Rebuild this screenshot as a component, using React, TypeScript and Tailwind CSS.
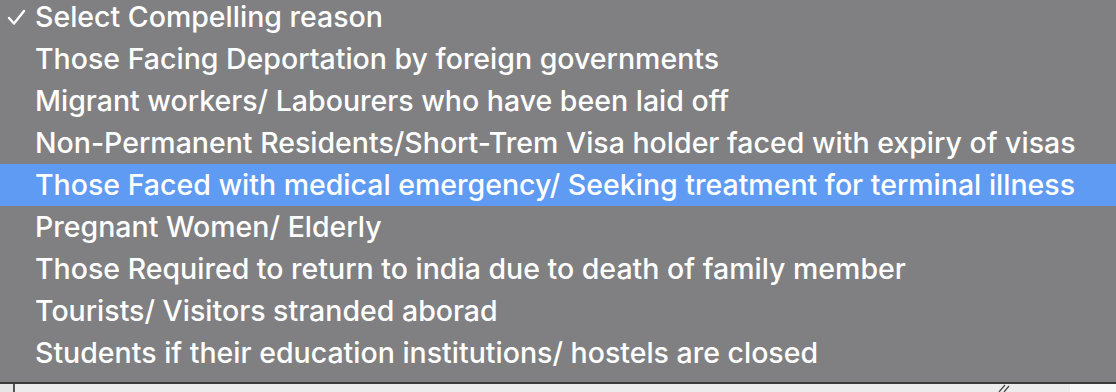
import React from 'react';

const OPTIONS = [
  'Select Compelling reason',
  'Those Facing Deportation by foreign governments',
  'Migrant workers/ Labourers who have been laid off',
  'Non-Permanent Residents/Short-Trem Visa holder faced with expiry of visas',
  'Those Faced with medical emergency/ Seeking treatment for terminal illness',
  'Pregnant Women/ Elderly',
  'Those Required to return to india due to death of family member',
  'Tourists/ Visitors stranded aborad',
  'Students if their education institutions/ hostels are closed',
];

const CHECKED = 0;
const HIGHLIGHTED = 4;

export default function App() {
  return (
    <div className="w-[1116px] h-[392px] overflow-hidden bg-[#e6e6e6] flex flex-col" style={{ fontFamily: 'Inter, "Noto Sans", sans-serif' }}>
      <div className="h-[384px] shrink-0 bg-[#808082] border-b-2 border-[#3a3a3a] overflow-hidden">
        <div className="-mt-1 flex flex-col">
          {OPTIONS.map((opt, i) => (
            <div
              key={opt}
              className={`h-[42px] flex items-center text-[28.5px] font-medium leading-none text-white ${i === HIGHLIGHTED ? 'bg-[#5f9bf3]' : ''}`}
            >
              <span className="w-[35px] shrink-0 flex justify-center">
                {i === CHECKED && (
                  <svg width="19" height="17" viewBox="0 0 19 17" fill="none" className="ml-[-3px]">
                    <path d="M2 9 L7 14.5 L17 2" stroke="white" strokeWidth="2.4" strokeLinecap="round" strokeLinejoin="round" />
                  </svg>
                )}
              </span>
              <span className="whitespace-nowrap">{opt}</span>
            </div>
          ))}
        </div>
      </div>
      <div className="flex-1 flex">
        <div className="w-[15px] border-r-2 border-[#555]" />
        <div className="flex-1 bg-[#ececec] relative">
          <svg width="14" height="8" viewBox="0 0 14 8" className="absolute left-[982px] top-0">
            <path d="M2 8 L8 1 M7 8 L12 2" stroke="#444" strokeWidth="1.2" />
          </svg>
        </div>
        <div className="w-[46px] bg-[#f7f7f7]" />
      </div>
    </div>
  );
}
